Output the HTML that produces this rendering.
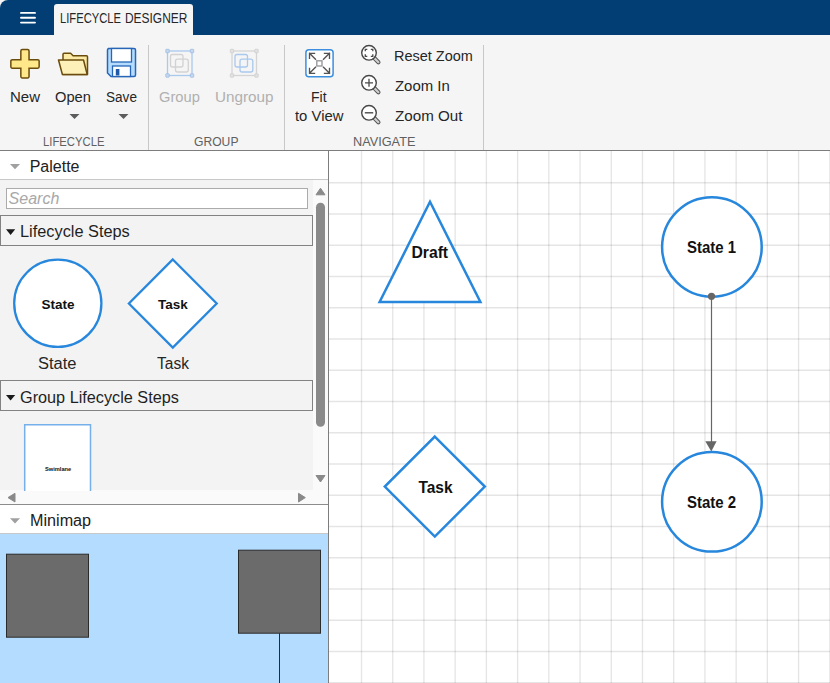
<!DOCTYPE html>
<html><head><meta charset="utf-8">
<style>
*{margin:0;padding:0;box-sizing:border-box}
html,body{width:830px;height:683px;overflow:hidden;background:#f5f5f5;font-family:"Liberation Sans",sans-serif;position:relative}
.a{position:absolute}
.t{position:absolute;white-space:nowrap;line-height:1;transform-origin:0 0}
#topbar{left:0;top:0;width:830px;height:35px;background:#023e73}
#tab{left:54px;top:4px;width:139px;height:31px;background:#f5f5f5;border-radius:3px 3px 0 0}
.tb{font-size:14px;color:#262626}
.sec{font-size:12.5px;color:#606060}
.dis{color:#b0b0b0}
.sep{width:1px;background:#c8c8c8}
svg{position:absolute;overflow:visible}
</style></head><body>
<div class="a" id="topbar"></div>
<div class="a" style="left:0;top:0;width:8px;height:8px;background:#f5f5f5"></div>
<div class="a" style="left:0;top:0;width:16px;height:16px;background:#023e73;border-radius:8px 0 0 0"></div>
<!-- hamburger -->
<svg style="left:0;top:0" width="40" height="30"><path d="M21 12.9H35M21 17.75H35M21 22.6H35" stroke="#fff" stroke-width="1.9" stroke-linecap="round"/></svg>
<div class="a" id="tab"></div>
<div class="t" style="left:59.9px;top:11px;font-size:14px;color:#262626;transform:scaleX(0.80)">LIFECYCLE</div>
<div class="t" style="left:125.15px;top:11px;font-size:14px;color:#262626;transform:scaleX(0.853)">DESIGNER</div>

<!-- toolbar icons -->
<svg style="left:0;top:0" width="830" height="150" viewBox="0 0 830 150">
  <!-- New plus -->
  <path d="M22.25 49.55H27.65A1.4 1.4 0 0 1 29.05 50.95V59.65H37.75A1.4 1.4 0 0 1 39.15 61.05V66.75A1.4 1.4 0 0 1 37.75 68.15H29.05V76.55A1.4 1.4 0 0 1 27.65 77.95H22.25A1.4 1.4 0 0 1 20.85 76.55V68.15H12.25A1.4 1.4 0 0 1 10.85 66.75V61.05A1.4 1.4 0 0 1 12.25 59.65H20.85V50.95A1.4 1.4 0 0 1 22.25 49.55Z" fill="#ffe88a" stroke="#6b4c0c" stroke-width="1.5"/>
  <!-- Open folder -->
  <path d="M63 74.5V54.3a1 1 0 0 1 1-1h6.6l2.5 2.5h13.4a1 1 0 0 1 1 1V74.5z" fill="#fbe9a6" stroke="#6b4c0c" stroke-width="1.5" stroke-linejoin="round"/>
  <path d="M58.5 60h25l3.7 14.5H62.4z" fill="#fdf0b8" stroke="#6b4c0c" stroke-width="1.5" stroke-linejoin="round"/>
  <!-- Save -->
  <path d="M108 48.5h26a1.5 1.5 0 0 1 1.5 1.5v25a1.5 1.5 0 0 1 -1.5 1.5h-23l-3.5-3.5V50a1.5 1.5 0 0 1 1.5 -1.5z" fill="#b5dcff" stroke="#2766b6" stroke-width="1.5"/>
  <rect x="111.5" y="48.5" width="20" height="13.5" fill="#fff" stroke="#2766b6" stroke-width="1.3"/>
  <rect x="112.5" y="66" width="18" height="10.5" fill="#fff" stroke="#2766b6" stroke-width="1.3"/>
  <rect x="115.8" y="69" width="3.6" height="6.5" fill="#1f5aa8"/>
  <!-- dropdown arrows -->
  <path d="M69.5 114h10l-5 5z" fill="#5c5c5c"/>
  <path d="M118.5 114h10l-5 5z" fill="#5c5c5c"/>
  <!-- Group icon -->
  <g opacity="1">
    <rect x="167.5" y="51" width="24.5" height="24.5" fill="none" stroke="#a9c9ed" stroke-width="1.3"/>
    <rect x="170.5" y="54.5" width="12.5" height="12.5" rx="2" fill="none" stroke="#d2d2d2" stroke-width="1.3"/>
    <rect x="175.5" y="59.2" width="12.8" height="12.8" rx="2" fill="none" stroke="#d2d2d2" stroke-width="1.3"/>
    <rect x="165.8" y="49.3" width="3.4" height="3.4" rx="0.4" fill="#c6d9ee" stroke="#9dbde3" stroke-width="0.8"/>
    <rect x="190.3" y="49.3" width="3.4" height="3.4" rx="0.4" fill="#c6d9ee" stroke="#9dbde3" stroke-width="0.8"/>
    <rect x="165.8" y="73.8" width="3.4" height="3.4" rx="0.4" fill="#c6d9ee" stroke="#9dbde3" stroke-width="0.8"/>
    <rect x="190.3" y="73.8" width="3.4" height="3.4" rx="0.4" fill="#c6d9ee" stroke="#9dbde3" stroke-width="0.8"/>
  </g>
  <!-- Ungroup icon -->
  <g>
    <rect x="232" y="51" width="24.5" height="24.5" fill="none" stroke="#d4d4d4" stroke-width="1.3"/>
    <rect x="235" y="54.5" width="12.5" height="12.5" rx="2" fill="none" stroke="#a9c9ed" stroke-width="1.3"/>
    <rect x="240" y="59.2" width="12.8" height="12.8" rx="2" fill="none" stroke="#a9c9ed" stroke-width="1.3"/>
    <rect x="230.3" y="49.3" width="3.4" height="3.4" rx="0.4" fill="#e2e2e2" stroke="#cfcfcf" stroke-width="0.8"/>
    <rect x="254.8" y="49.3" width="3.4" height="3.4" rx="0.4" fill="#e2e2e2" stroke="#cfcfcf" stroke-width="0.8"/>
    <rect x="230.3" y="73.8" width="3.4" height="3.4" rx="0.4" fill="#e2e2e2" stroke="#cfcfcf" stroke-width="0.8"/>
    <rect x="254.8" y="73.8" width="3.4" height="3.4" rx="0.4" fill="#e2e2e2" stroke="#cfcfcf" stroke-width="0.8"/>
  </g>
  <!-- Fit to view -->
  <rect x="305.9" y="49.7" width="27.2" height="27" rx="3" fill="#fff" stroke="#3b8fde" stroke-width="1.5"/>
  <g stroke="#525252" stroke-width="1.35" fill="none" stroke-linecap="square">
    <path d="M309.5 53.3h5M309.5 53.3v5M309.5 53.3l6 6"/>
    <path d="M329.5 53.3h-5M329.5 53.3v5M329.5 53.3l-6 6"/>
    <path d="M309.5 73.3h5M309.5 73.3v-5M309.5 73.3l6 -6"/>
    <path d="M329.5 73.3h-5M329.5 73.3v-5M329.5 73.3l-6 -6"/>
  </g>
  <rect x="316.8" y="60.8" width="5.2" height="5.2" fill="none" stroke="#9a9a9a" stroke-width="1.4"/>
  <!-- zoom icons -->
  <g id="mag">
    <path d="M373.8 57.6l4.6 4.6" stroke="#555" stroke-width="4.2" stroke-linecap="round"/>
    <path d="M373.8 57.6l4.6 4.6" stroke="#cfcfcf" stroke-width="2.2" stroke-linecap="round"/>
    <circle cx="369" cy="52.8" r="7.3" fill="#fff" stroke="#474747" stroke-width="1.4"/>
  </g>
  <g stroke="#4a4a4a" stroke-width="1.3" fill="none">
    <path d="M365.3 51.3v-2h2M370.8 49.3h2v2M372.8 54.3v2h-2M367.3 56.3h-2v-2"/>
  </g>
  <use href="#mag" y="30"/>
  <path d="M365 82.8h8M369 78.8v8" stroke="#4a4a4a" stroke-width="1.3"/>
  <use href="#mag" y="60"/>
  <path d="M364.8 112.8h8.4" stroke="#4a4a4a" stroke-width="1.4"/>
</svg>

<!-- toolbar text -->
<div class="t tb" style="left:9.7px;top:89.5px;transform:scaleX(1.07)">New</div>
<div class="t tb" style="left:54.6px;top:89.5px;transform:scaleX(1.047)">Open</div>
<div class="t tb" style="left:105.9px;top:89.5px;transform:scaleX(0.97)">Save</div>
<div class="t tb dis" style="left:159.2px;top:89.5px;transform:scaleX(1.05)">Group</div>
<div class="t tb dis" style="left:214.5px;top:89.5px;transform:scaleX(1.09)">Ungroup</div>
<div class="t tb" style="left:311px;top:89.5px">Fit</div>
<div class="t tb" style="left:295.3px;top:109px;transform:scaleX(1.06)">to View</div>
<div class="t tb" style="left:393.5px;top:48.5px;transform:scaleX(1.033)">Reset Zoom</div>
<div class="t tb" style="left:394.5px;top:78.6px;transform:scaleX(1.067)">Zoom In</div>
<div class="t tb" style="left:394.5px;top:108.5px;transform:scaleX(1.084)">Zoom Out</div>
<div class="t sec" style="left:43.1px;top:136.4px;transform:scaleX(0.903)">LIFECYCLE</div>
<div class="t sec" style="left:194px;top:136.4px;transform:scaleX(0.97)">GROUP</div>
<div class="t sec" style="left:352.6px;top:136.4px;transform:scaleX(1.017)">NAVIGATE</div>
<div class="a sep" style="left:148px;top:45px;height:105px"></div>
<div class="a sep" style="left:284px;top:45px;height:105px"></div>
<div class="a sep" style="left:483px;top:45px;height:105px"></div>
<div class="a" style="left:0;top:150px;width:830px;height:1px;background:#7d7d7d"></div>

<!-- left panel -->
<div class="a" style="left:0;top:151px;width:328px;height:28px;background:#fff"></div>
<div class="a" style="left:0;top:179px;width:328px;height:1px;background:#c8c8c8"></div>
<svg style="left:0;top:0" width="20" height="200"><path d="M10 164h10l-5 5.2z" fill="#a0a0a0"/></svg>
<div class="t" style="left:29.7px;top:159px;font-size:16px;color:#212121">Palette</div>
<div class="a" style="left:0;top:180px;width:313px;height:310px;background:#f3f3f3"></div>
<div class="a" style="left:313px;top:180px;width:15px;height:324px;background:#fafafa"></div>
<div class="a" style="left:0;top:490px;width:313px;height:14px;background:#fafafa"></div>
<!-- search -->
<div class="a" style="left:6px;top:188px;width:302px;height:21px;background:#fff;border:1px solid #ababab"></div>
<div class="t" style="left:8.6px;top:191px;font-size:16px;font-style:italic;color:#a8a8a8">Search</div>
<!-- accordion 1 -->
<div class="a" style="left:0;top:215px;width:313px;height:31px;border:1px solid #828282;background:#f3f3f3"></div>
<svg style="left:0;top:0" width="20" height="250"><path d="M6 229.3h9.2l-4.6 5.6z" fill="#1a1a1a"/></svg>
<div class="t" style="left:19.5px;top:223.5px;font-size:16px;color:#1f1f1f;transform:scaleX(1.02)">Lifecycle Steps</div>
<!-- palette shapes -->
<svg style="left:0;top:0" width="330" height="683">
  <circle cx="57.8" cy="303.3" r="43.6" fill="#fff" stroke="#2787dc" stroke-width="2.3"/>
  <path d="M172.8 259.5L216.7 303.5L172.8 347.5L128.9 303.5Z" fill="#fff" stroke="#2787dc" stroke-width="2.3"/>
</svg>
<div class="t" style="left:41.6px;top:297.5px;font-size:13.5px;font-weight:bold;color:#111">State</div>
<div class="t" style="left:158px;top:297.5px;font-size:13.5px;font-weight:bold;color:#111">Task</div>
<div class="t" style="left:37.8px;top:355.8px;font-size:16px;color:#262626;transform:scaleX(1.03)">State</div>
<div class="t" style="left:156.6px;top:355.8px;font-size:16px;color:#262626;transform:scaleX(0.97)">Task</div>
<!-- accordion 2 -->
<div class="a" style="left:0;top:380px;width:313px;height:31px;border:1px solid #828282;background:#f3f3f3"></div>
<svg style="left:0;top:0" width="20" height="420"><path d="M6 395h9.2l-4.6 5.6z" fill="#1a1a1a"/></svg>
<div class="t" style="left:19.5px;top:390px;font-size:16px;color:#1f1f1f;transform:scaleX(1.015)">Group Lifecycle Steps</div>
<!-- swimlane -->
<svg style="left:0;top:0" width="100" height="490"><path d="M24.7 491V424.7H90.5V491" fill="#fff" stroke="#75b0ea" stroke-width="1.5"/></svg>
<div class="t" style="left:45px;top:466.5px;font-size:5.7px;font-weight:bold;color:#111">Swimlane</div>
<!-- scrollbars -->
<svg style="left:0;top:0" width="330" height="510">
  <path d="M316 194.8L320.5 188.2L325 194.8z" fill="#8a8a8a" stroke="#8a8a8a" stroke-width="1" stroke-linejoin="round"/>
  <rect x="316" y="202.8" width="9" height="224" rx="4.5" fill="#8a8a8a"/>
  <path d="M316 475.5L320.5 482L325 475.5z" fill="#8a8a8a" stroke="#8a8a8a" stroke-width="1" stroke-linejoin="round"/>
  <path d="M15 493.3L8 497.6L15 502z" fill="#8a8a8a" stroke="#8a8a8a" stroke-width="1" stroke-linejoin="round"/>
  <path d="M298.5 493.3L305.3 497.6L298.5 502z" fill="#8a8a8a" stroke="#8a8a8a" stroke-width="1" stroke-linejoin="round"/>
</svg>
<!-- minimap header -->
<div class="a" style="left:0;top:504px;width:328px;height:1px;background:#8c8c8c"></div>
<div class="a" style="left:0;top:505px;width:328px;height:28px;background:#fff"></div>
<div class="a" style="left:0;top:533px;width:328px;height:1px;background:#c8c8c8"></div>
<svg style="left:0;top:0" width="20" height="530"><path d="M10 518.2h10l-5 5.2z" fill="#a0a0a0"/></svg>
<div class="t" style="left:29.7px;top:512.5px;font-size:16px;color:#212121;transform:scaleX(1.01)">Minimap</div>
<!-- minimap -->
<div class="a" style="left:0;top:534px;width:328px;height:149px;background:#b3dcfe"></div>
<svg style="left:0;top:0" width="330" height="683"><rect x="6.5" y="554.2" width="82" height="83" fill="#6b6b6b" stroke="#2b2b2b" stroke-width="1"/><rect x="238.5" y="550.2" width="82" height="83" fill="#6b6b6b" stroke="#2b2b2b" stroke-width="1"/><path d="M279.5 633.2V683" stroke="#2b2b2b" stroke-width="1"/></svg>
<div class="a" style="left:328px;top:151px;width:1px;height:532px;background:#7d7d7d"></div>

<!-- canvas -->
<svg style="left:329px;top:151px" width="501" height="532" viewBox="329 151 501 532">
  <rect x="329" y="151" width="501" height="532" fill="#fff"/>
  <g id="grid" stroke="#000" stroke-opacity="0.1" stroke-width="1.35"><line x1="361.50" y1="151" x2="361.50" y2="683"/><line x1="392.72" y1="151" x2="392.72" y2="683"/><line x1="423.94" y1="151" x2="423.94" y2="683"/><line x1="455.16" y1="151" x2="455.16" y2="683"/><line x1="486.38" y1="151" x2="486.38" y2="683"/><line x1="517.60" y1="151" x2="517.60" y2="683"/><line x1="548.82" y1="151" x2="548.82" y2="683"/><line x1="580.04" y1="151" x2="580.04" y2="683"/><line x1="611.26" y1="151" x2="611.26" y2="683"/><line x1="642.48" y1="151" x2="642.48" y2="683"/><line x1="673.70" y1="151" x2="673.70" y2="683"/><line x1="704.92" y1="151" x2="704.92" y2="683"/><line x1="736.14" y1="151" x2="736.14" y2="683"/><line x1="767.36" y1="151" x2="767.36" y2="683"/><line x1="798.58" y1="151" x2="798.58" y2="683"/><line x1="829.80" y1="151" x2="829.80" y2="683"/><line x1="329" y1="182.77" x2="830" y2="182.77"/><line x1="329" y1="214.02" x2="830" y2="214.02"/><line x1="329" y1="245.27" x2="830" y2="245.27"/><line x1="329" y1="276.52" x2="830" y2="276.52"/><line x1="329" y1="307.77" x2="830" y2="307.77"/><line x1="329" y1="339.02" x2="830" y2="339.02"/><line x1="329" y1="370.27" x2="830" y2="370.27"/><line x1="329" y1="401.52" x2="830" y2="401.52"/><line x1="329" y1="432.77" x2="830" y2="432.77"/><line x1="329" y1="464.02" x2="830" y2="464.02"/><line x1="329" y1="495.27" x2="830" y2="495.27"/><line x1="329" y1="526.52" x2="830" y2="526.52"/><line x1="329" y1="557.77" x2="830" y2="557.77"/><line x1="329" y1="589.02" x2="830" y2="589.02"/><line x1="329" y1="620.27" x2="830" y2="620.27"/><line x1="329" y1="651.52" x2="830" y2="651.52"/><line x1="329" y1="682.77" x2="830" y2="682.77"/></g>
  <path d="M430 201.8L480.4 302L379.6 302Z" fill="#fff" stroke="#2787dc" stroke-width="2.5" stroke-linejoin="miter"/>
  <circle cx="711.9" cy="247" r="49.8" fill="#fff" stroke="#2787dc" stroke-width="2.5"/>
  <circle cx="711.9" cy="501.8" r="49.8" fill="#fff" stroke="#2787dc" stroke-width="2.5"/>
  <path d="M434.8 436.6L484.8 486.6L434.8 536.6L384.8 486.6Z" fill="#fff" stroke="#2787dc" stroke-width="2.5"/>
  <path d="M711.5 296.5V442" stroke="#666" stroke-width="1.2"/>
  <circle cx="711.5" cy="296.3" r="3.6" fill="#666"/>
  <path d="M705.3 441.3H716.6L711.3 451.4Z" fill="#666"/>
  <text transform="translate(429.75 258.2) scale(1.05 1.1)" font-family="Liberation Sans" font-weight="bold" font-size="15" text-anchor="middle" fill="#111">Draft</text>
  <text transform="translate(711.55 252.5) scale(1.0 1.12)" font-family="Liberation Sans" font-weight="bold" font-size="15" text-anchor="middle" fill="#111">State 1</text>
  <text transform="translate(711.55 507.9) scale(1.0 1.12)" font-family="Liberation Sans" font-weight="bold" font-size="15" text-anchor="middle" fill="#111">State 2</text>
  <text transform="translate(435.5 493.2) scale(1.035 1.1)" font-family="Liberation Sans" font-weight="bold" font-size="15" text-anchor="middle" fill="#111">Task</text>
</svg>
</body></html>
